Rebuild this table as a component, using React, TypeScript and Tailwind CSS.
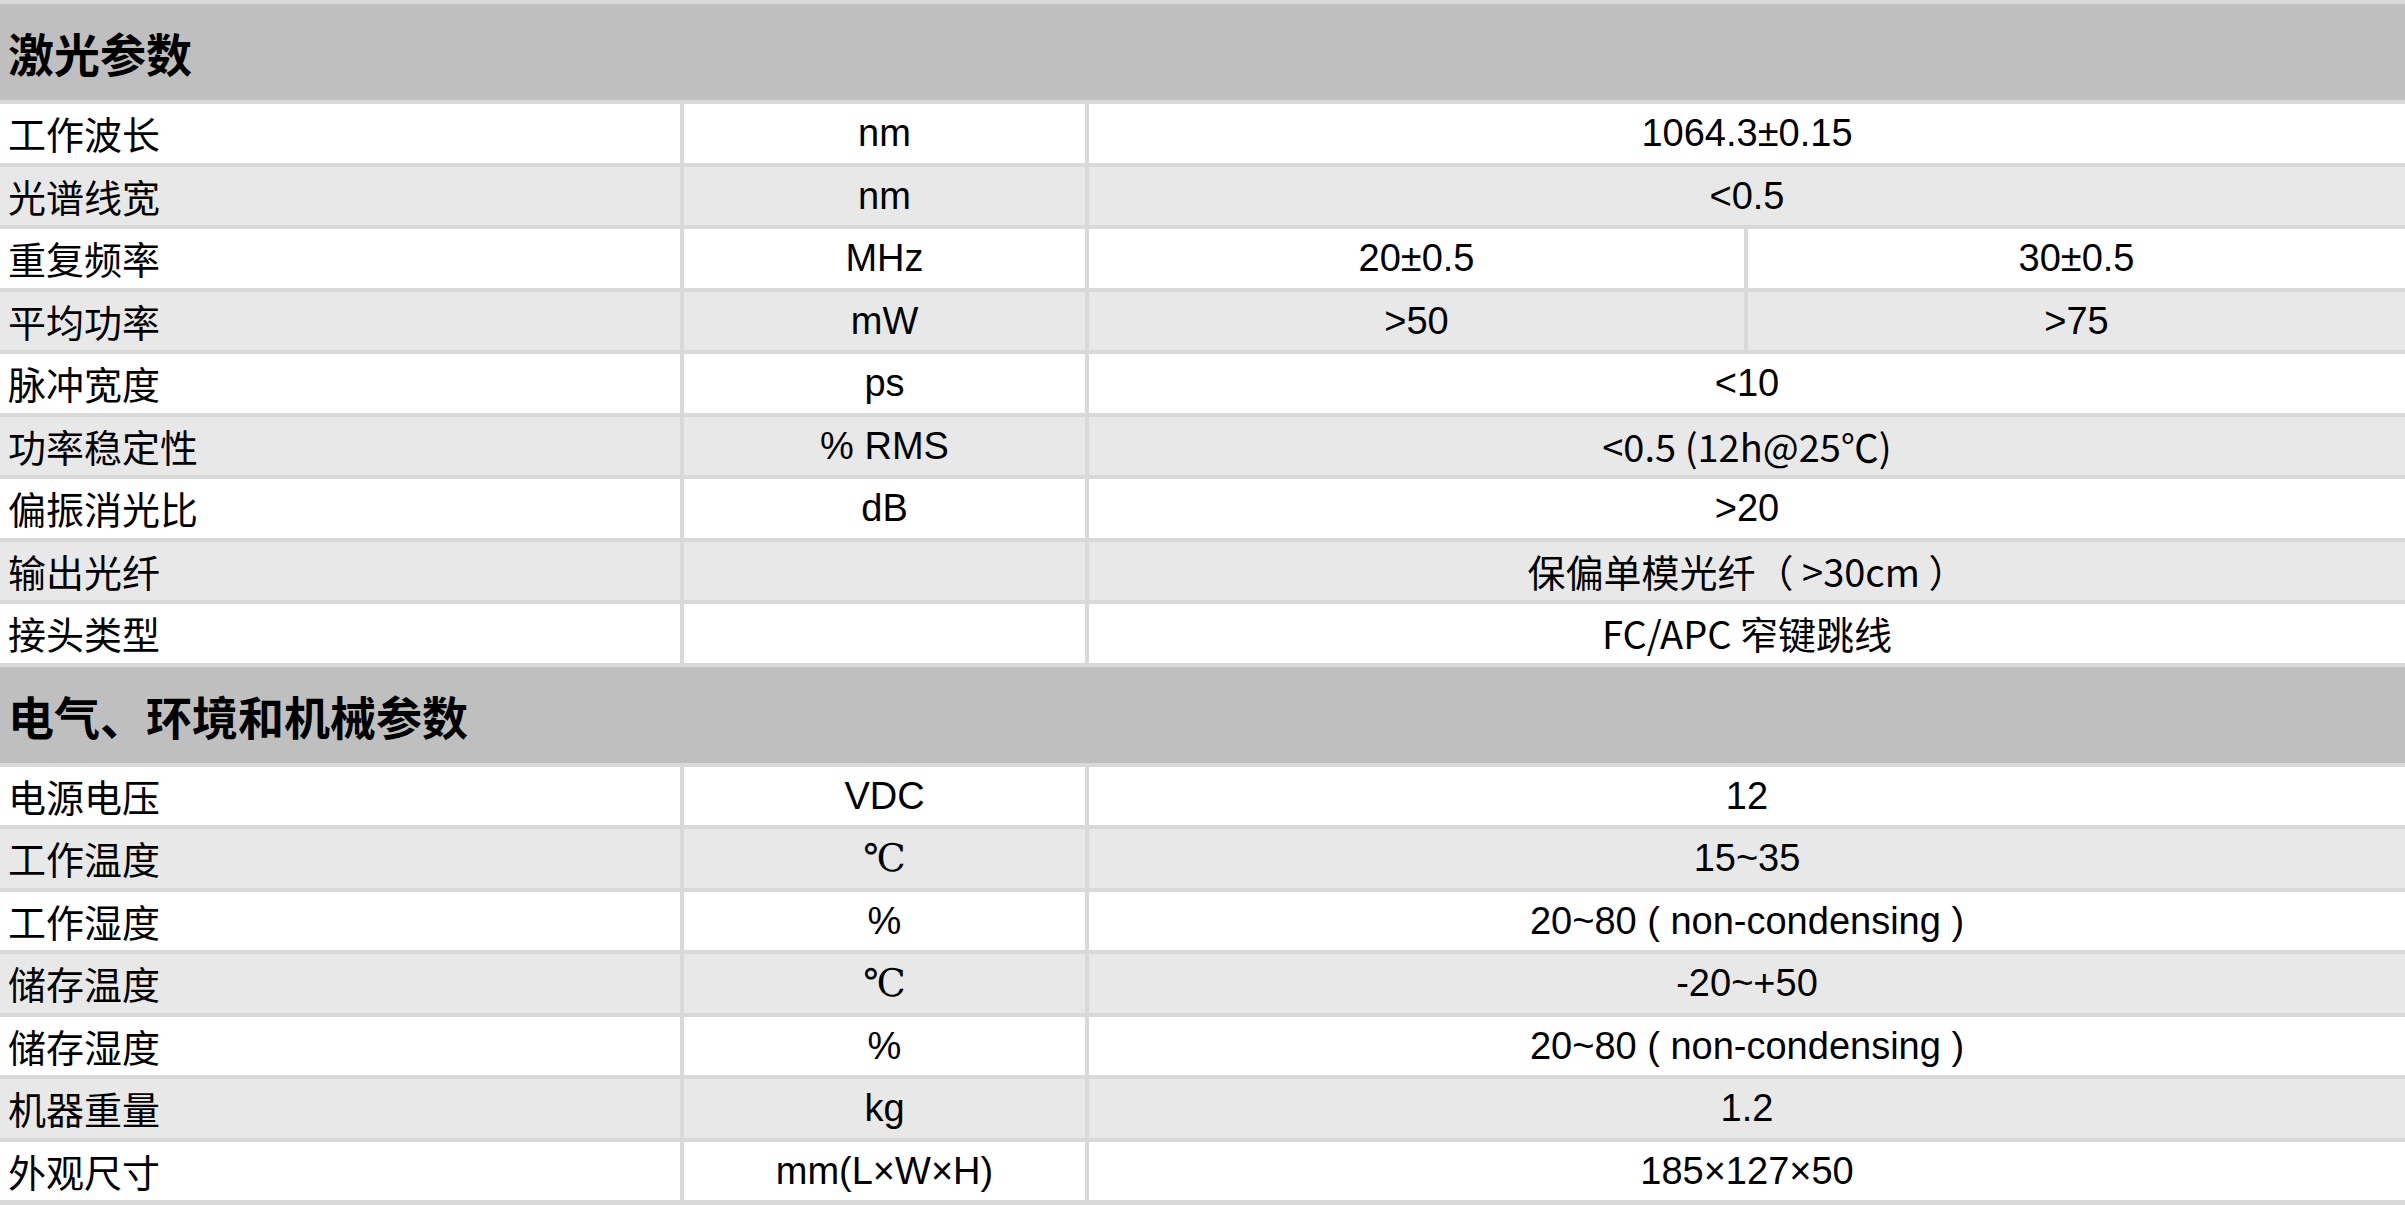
import React from 'react';

type Row = { label: string; unit: string; values: string[]; cjk?: boolean; serifUnit?: boolean };

const laser: Row[] = [
  { label: '工作波长', unit: 'nm', values: ['1064.3±0.15'] },
  { label: '光谱线宽', unit: 'nm', values: ['<0.5'] },
  { label: '重复频率', unit: 'MHz', values: ['20±0.5', '30±0.5'] },
  { label: '平均功率', unit: 'mW', values: ['>50', '>75'] },
  { label: '脉冲宽度', unit: 'ps', values: ['<10'] },
  { label: '功率稳定性', unit: '% RMS', values: ['<0.5 (12h@25℃)'], cjk: true },
  { label: '偏振消光比', unit: 'dB', values: ['>20'] },
  { label: '输出光纤', unit: '', values: ['保偏单模光纤（ >30cm ）'], cjk: true },
  { label: '接头类型', unit: '', values: ['FC/APC 窄键跳线'], cjk: true },
];

const general: Row[] = [
  { label: '电源电压', unit: 'VDC', values: ['12'] },
  { label: '工作温度', unit: '℃', values: ['15~35'], serifUnit: true },
  { label: '工作湿度', unit: '%', values: ['20~80 ( non-condensing )'] },
  { label: '储存温度', unit: '℃', values: ['-20~+50'], serifUnit: true },
  { label: '储存湿度', unit: '%', values: ['20~80 ( non-condensing )'] },
  { label: '机器重量', unit: 'kg', values: ['1.2'] },
  { label: '外观尺寸', unit: 'mm(L×W×H)', values: ['185×127×50'] },
];

const cjkFont = "font-['Noto_Sans_CJK_SC',sans-serif]";
const latinFont = "font-['Liberation_Sans','Noto_Sans_CJK_SC',sans-serif]";

function Section({ title, rows }: { title: string; rows: Row[] }) {
  return (
    <>
      <div className={`col-span-4 h-[96px] bg-[#bfbfbf] flex items-center pl-[8px] text-[46px] font-bold leading-none ${cjkFont}`}>
        {title}
      </div>
      {rows.map((r, i) => {
        const bg = i % 2 === 0 ? 'bg-white' : 'bg-[#e8e8e8]';
        const cell = `h-[58.5px] ${bg} flex items-center text-[38px] leading-none`;
        return (
          <React.Fragment key={r.label}>
            <div className={`${cell} pl-[8px] ${cjkFont}`}>{r.label}</div>
            <div className={`${cell} justify-center ${r.serifUnit ? "font-['Liberation_Serif','DejaVu_Serif','Noto_Sans_CJK_SC',serif]" : latinFont}`}>
              {r.unit}
            </div>
            {r.values.length === 1 ? (
              <div className={`${cell} col-span-2 justify-center ${r.cjk ? cjkFont : latinFont}`}>{r.values[0]}</div>
            ) : (
              r.values.map(v => (
                <div key={v} className={`${cell} justify-center ${latinFont}`}>{v}</div>
              ))
            )}
          </React.Fragment>
        );
      })}
    </>
  );
}

export default function App() {
  return (
    <div className="w-[2405px] h-[1205px] overflow-hidden bg-[#d9d9d9] text-black">
      <div className="grid grid-cols-[680px_401px_655px_1fr] gap-[4px] pt-[4px]">
        <Section title="激光参数" rows={laser} />
        <Section title="电气、环境和机械参数" rows={general} />
      </div>
    </div>
  );
}
